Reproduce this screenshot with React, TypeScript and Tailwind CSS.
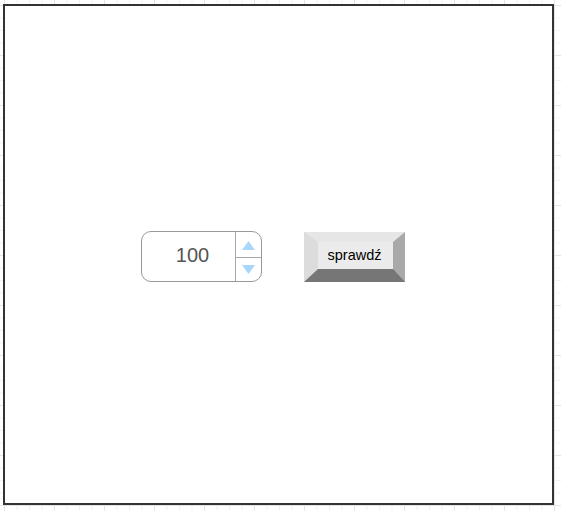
import React from "react";

export default function App() {
  return (
    <div className="w-[561px] h-[511px] overflow-hidden bg-white bg-[linear-gradient(to_right,#e4e4e4_1px,transparent_1px),linear-gradient(to_bottom,#e4e4e4_1px,transparent_1px),linear-gradient(to_right,#f2f2f2_1px,transparent_1px),linear-gradient(to_bottom,#f2f2f2_1px,transparent_1px)] bg-[size:50px_50px,50px_50px,12.5px_12.5px,12.5px_12.5px] bg-[position:4px_5px,4px_5px,4px_5px,4px_5px] pt-[4px] pl-[3px]" style={{ fontFamily: '"Liberation Sans", Arial, sans-serif' }}>
      <div className="w-[551px] h-[501px] border-2 border-[#333] bg-white flex items-start pt-[225px] pl-[136px] gap-[42px]">
        <div className="w-[121px] h-[51px] rounded-[10px] border border-[#999] flex overflow-hidden">
          <div className="flex-1 flex items-center justify-center text-[20px] text-[#555] pl-[8px] pb-[3px]">100</div>
          <div className="w-[26px] border-l border-[#a8a8a8] flex flex-col">
            <div className="flex-1 flex items-center justify-center border-b border-[#a8a8a8] pt-[2px]">
              <svg width="13" height="9" viewBox="0 0 13 9"><polygon points="6.5,0 13,9 0,9" fill="#a9d6fb" /></svg>
            </div>
            <div className="flex-1 flex items-center justify-center">
              <svg width="13" height="9" viewBox="0 0 13 9"><polygon points="0,0 13,0 6.5,9" fill="#a9d6fb" /></svg>
            </div>
          </div>
        </div>
        <div className="w-[101px] h-[50px] mt-[1px] border-l-[14px] border-t-[10px] border-r-[12px] border-b-[13px] border-l-[#dcdcdc] border-t-[#e6e6e6] border-r-[#a9a9a9] border-b-[#767676] bg-[#ebebeb] flex items-center justify-center text-[14.5px] text-black pr-[2px]">
          sprawdź
        </div>
      </div>
    </div>
  );
}
